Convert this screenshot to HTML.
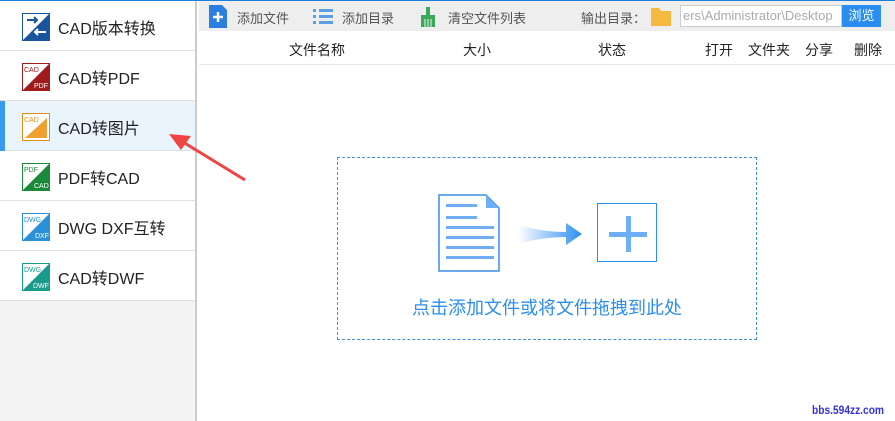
<!DOCTYPE html><html><head><meta charset="utf-8"><style>
*{margin:0;padding:0;box-sizing:border-box}
body{width:895px;height:421px;overflow:hidden;background:#fff;font-family:"Liberation Sans","Noto Sans CJK SC",sans-serif;position:relative}
.top{position:absolute;left:0;top:0;width:895px;height:1px;background:#1e7fd8}
.side{position:absolute;left:0;top:1px;width:197px;height:420px;background:#f3f3f3;border-right:2px solid #ccc}
.row{height:50px;border-bottom:1px solid #e0e0e0;background:#fff;position:relative;font-size:16px;color:#222}
.row.sel{background:#eaf4fd}
.row.sel:before{content:"";position:absolute;left:0;top:0;width:5px;height:50px;background:#3a9af0}
.row .ic{position:absolute;left:22px;top:12px;width:28px;height:28px}
.row span{position:absolute;left:58px;top:14px}
.tb{position:absolute;left:199px;top:1px;width:696px;height:30px;background:#eee;font-size:13px;color:#555}
.tb div{position:absolute;top:7px}
.tb svg{position:absolute}
.hdr{position:absolute;left:199px;top:31px;width:696px;height:34px;border-bottom:1px solid #e6e6e6;font-size:14px;color:#222}
.hdr div{position:absolute;top:9px}
.drop{position:absolute;left:337px;top:157px;width:420px;height:183px;border:1px dashed #3d8fe0}
</style></head><body>
<div class="top"></div>
<div class="side">
<div class="row"><svg class="ic" viewBox="0 0 28 28"><rect x=".5" y=".5" width="27" height="27" fill="#fff" stroke="#1a56a0"/><path d="M1 27L27 1V27Z" fill="#1a56a0"/><path d="M5 7h10M12 4l3 3-3 3" stroke="#1a56a0" stroke-width="2" fill="none"/><path d="M24 19H13M16 16l-3 3 3 3" stroke="#fff" stroke-width="2" fill="none"/></svg><span>CAD版本转换</span></div>
<div class="row"><svg class="ic" viewBox="0 0 28 28"><rect x=".5" y=".5" width="27" height="27" fill="#fff" stroke="#a01c1c"/><path d="M1 27L27 1V27Z" fill="#a01c1c"/><text x="2" y="9" font-size="7" fill="#a01c1c">CAD</text><text x="12" y="25" font-size="7" fill="#fff">PDF</text></svg><span>CAD转PDF</span></div>
<div class="row sel"><svg class="ic" viewBox="0 0 28 28"><rect x=".5" y=".5" width="27" height="27" fill="#fff" stroke="#e0901a"/><path d="M3 25L25 5V25Z" fill="#f0a030"/><text x="2" y="9" font-size="7" fill="#e0901a">CAD</text></svg><span>CAD转图片</span></div>
<div class="row"><svg class="ic" viewBox="0 0 28 28"><rect x=".5" y=".5" width="27" height="27" fill="#fff" stroke="#1a8a3a"/><path d="M1 27L27 1V27Z" fill="#1a8a3a"/><text x="2" y="9" font-size="7" fill="#1a8a3a">PDF</text><text x="12" y="25" font-size="7" fill="#fff">CAD</text></svg><span>PDF转CAD</span></div>
<div class="row"><svg class="ic" viewBox="0 0 28 28"><rect x=".5" y=".5" width="27" height="27" fill="#fff" stroke="#2a90d8"/><path d="M1 27L27 1V27Z" fill="#2a90d8"/><text x="2" y="9" font-size="7" fill="#2a90d8">DWG</text><text x="13" y="25" font-size="7" fill="#fff">DXF</text></svg><span>DWG DXF互转</span></div>
<div class="row"><svg class="ic" viewBox="0 0 28 28"><rect x=".5" y=".5" width="27" height="27" fill="#fff" stroke="#1a9a8a"/><path d="M1 27L27 1V27Z" fill="#1a9a8a"/><text x="2" y="9" font-size="7" fill="#1a9a8a">DWG</text><text x="11" y="25" font-size="7" fill="#fff">DWF</text></svg><span>CAD转DWF</span></div>
</div>
<div class="tb">
<svg style="left:10px;top:4px" width="18" height="23" viewBox="0 0 18 23"><path d="M0 0H13L18 5V23H0Z" fill="#2a7fe0"/><path d="M9 7v10M4 12h10" stroke="#fff" stroke-width="2.5"/></svg>
<div style="left:38px">添加文件</div>
<svg style="left:114px;top:8px" width="20" height="16"><g fill="#5a9ee8"><rect x="0" y="0" width="3" height="3"/><rect x="6" y="0" width="14" height="3"/><rect x="0" y="6" width="3" height="3"/><rect x="6" y="6" width="14" height="3"/><rect x="0" y="12" width="3" height="3"/><rect x="6" y="12" width="14" height="3"/></g></svg>
<div style="left:143px">添加目录</div>
<svg style="left:221px;top:6px" width="16" height="20"><rect x="6" y="0" width="4" height="8" fill="#3aaa5a"/><rect x="1" y="8" width="14" height="12" fill="#3aaa5a"/><path d="M5 12v8M8 12v8M11 12v8" stroke="#eee"/></svg>
<div style="left:249px">清空文件列表</div>
<div style="left:382px">输出目录：</div>
<svg style="left:452px;top:7px" width="20" height="18"><path d="M0 0H8L10 3H20V18H0Z" fill="#f5b940"/></svg>
<div style="left:481px;top:4px;width:162px;height:22px;background:#fff;border:1px solid #ccc;color:#aaa;font-size:13px;padding:2px 2px;overflow:hidden;white-space:nowrap">ers\Administrator\Desktop</div>
<div style="left:643px;top:4px;width:39px;height:22px;background:#2a8ef0;color:#fff;font-size:13px;text-align:center;line-height:22px">浏览</div>
</div>
<div class="hdr">
<div style="left:90px">文件名称</div><div style="left:264px">大小</div><div style="left:399px">状态</div><div style="left:506px">打开</div><div style="left:549px">文件夹</div><div style="left:606px">分享</div><div style="left:655px">删除</div>
</div>
<div class="drop">
<svg style="position:absolute;left:100px;top:36px" width="62" height="78" viewBox="0 0 62 78"><path d="M1 1H48L61 14V77H1Z" fill="#fff" stroke="#3a8ee8" stroke-width="1.5"/><path d="M48 1L61 14H48Z" fill="#6eaef5"/><g fill="#6eaef5"><rect x="8" y="10" width="31" height="3"/><rect x="8" y="22" width="31" height="3"/><rect x="8" y="32" width="48" height="3"/><rect x="8" y="42" width="48" height="3"/><rect x="8" y="52" width="48" height="3"/><rect x="8" y="62" width="48" height="3"/></g></svg>
<svg style="position:absolute;left:180px;top:62px" width="66" height="30"><defs><linearGradient id="g"><stop offset="0" stop-color="#2a8ef0" stop-opacity="0"/><stop offset="1" stop-color="#2a8ef0"/></linearGradient></defs><path d="M0 5Q25 12 48 12V3L64 14L48 25V17Q25 17 0 24Z" fill="url(#g)"/></svg>
<div style="position:absolute;left:259px;top:45px;width:60px;height:59px;border:1.5px solid #2a8ef0"><div style="position:absolute;left:28px;top:12px;width:5px;height:36px;background:#6eaef5"></div><div style="position:absolute;left:11px;top:28px;width:38px;height:5px;background:#6eaef5"></div></div>
<div style="position:absolute;left:0;width:100%;top:136px;text-align:center;font-size:18px;color:#2a8ef0">点击添加文件或将文件拖拽到此处</div>
</div>
<svg style="position:absolute;left:165px;top:130px" width="85" height="52"><path d="M80 50L18 12" stroke="#ee4444" stroke-width="3"/><path d="M4 4L26 6L16 20Z" fill="#ee4444"/></svg>
<div style="position:absolute;left:812px;top:403px;font-size:12px;font-weight:bold;color:#3333dd;font-family:'Liberation Sans Narrow','Liberation Sans',sans-serif;transform:scaleX(0.85);transform-origin:left">bbs.594zz.com</div>
</body></html>
